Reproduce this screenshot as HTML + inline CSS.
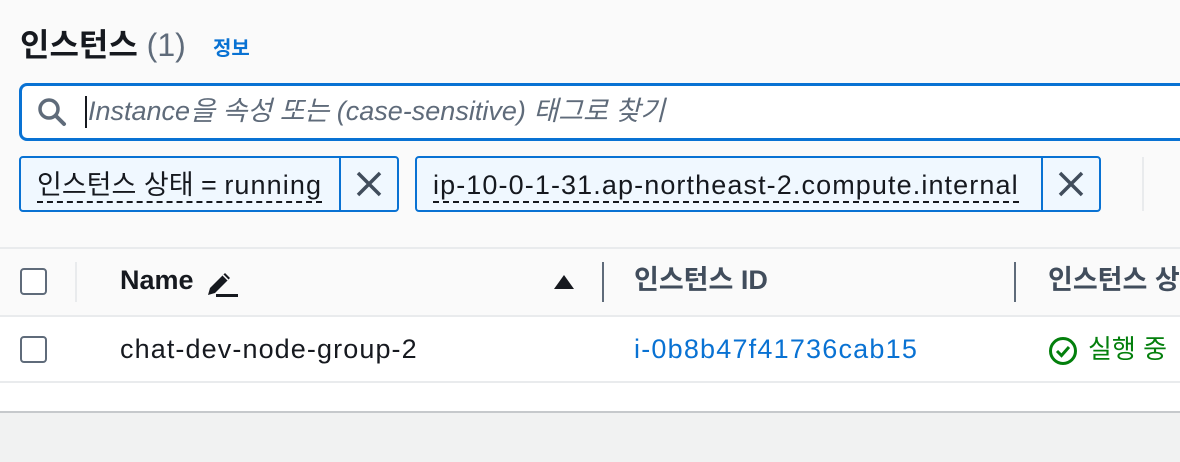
<!DOCTYPE html>
<html><head><meta charset="utf-8"><style>
*{margin:0;padding:0;box-sizing:border-box}
body{width:1180px;height:462px;overflow:hidden;background:#fafafa;font-family:"Liberation Sans","Noto Sans CJK KR",sans-serif;position:relative;color:#16191f}
.a{position:absolute;white-space:nowrap}
.l{letter-spacing:1.1px}
.tok{position:absolute;top:156px;height:56px;border:2px solid #0972d3;border-radius:4px;background:#f0f8ff}
.tok .t{position:absolute;left:16px;top:12px;font-size:27px;line-height:31px;border-bottom:2px dashed #16191f;color:#16191f}
.tok .x{position:absolute;top:0;right:0;width:58px;height:52px;border-left:2px solid #0972d3}
.cb{position:absolute;left:20px;width:27px;height:27px;border:2px solid #5f6b7a;border-radius:4px;background:#fff}
</style></head><body>
<div class="a" style="left:20px;top:24px;font-size:32px;font-weight:bold;line-height:42px">인스턴스 <span style="font-weight:normal;color:#5f6b7a">(1)</span></div>
<div class="a" style="left:213px;top:32px;font-size:20px;font-weight:bold;color:#0972d3">정보</div>

<div class="a" style="left:19px;top:83px;width:1180px;height:58px;border:3px solid #0972d3;border-radius:8px;background:#fff"></div>
<svg class="a" style="left:36px;top:96px" width="32" height="32" viewBox="0 0 32 32"><circle cx="13" cy="13" r="9" fill="none" stroke="#5f6b7a" stroke-width="3.5"/><path d="M20 20l8 8" stroke="#5f6b7a" stroke-width="4" stroke-linecap="round"/></svg>
<div class="a" style="left:85px;top:96px;width:2px;height:32px;background:#16191f"></div>
<div class="a" style="left:88px;top:95px;font-size:27px;line-height:32px;font-style:italic;color:#5f6b7a">Instance을 속성 또는 (case-sensitive) 태그로 찾기</div>

<div class="tok" style="left:19px;width:380px"><div class="t">인스턴스 상태 = <span class="l">running</span></div><div class="x"><svg width="56" height="52" viewBox="0 0 56 52"><path d="M17 15l22 22M39 15L17 37" stroke="#414d5c" stroke-width="3.5"/></svg></div></div>
<div class="tok" style="left:415px;width:686px"><div class="t l">ip-10-0-1-31.ap-northeast-2.compute.internal</div><div class="x"><svg width="56" height="52" viewBox="0 0 56 52"><path d="M17 15l22 22M39 15L17 37" stroke="#414d5c" stroke-width="3.5"/></svg></div></div>
<div class="a" style="left:1142px;top:157px;width:2px;height:54px;background:#e9ebed"></div>

<div class="a" style="left:0;top:247px;width:1180px;height:2px;background:#e9ebed"></div>
<div class="a" style="left:0;top:315px;width:1180px;height:2px;background:#e9ebed"></div>
<div class="a" style="left:0;top:317px;width:1180px;height:95px;background:#fff"></div>
<div class="a" style="left:0;top:381px;width:1180px;height:2px;background:#e9ebed"></div>
<div class="a" style="left:0;top:411px;width:1180px;height:2px;background:#c6c9cc"></div>
<div class="a" style="left:0;top:413px;width:1180px;height:49px;background:#f1f2f2"></div>

<div class="cb" style="top:268px"></div>
<div class="a" style="left:75px;top:262px;width:2px;height:40px;background:#e9ebed"></div>
<div class="a" style="left:120px;top:265px;font-size:27px;font-weight:bold;line-height:30px">Name</div>
<svg class="a" style="left:204px;top:266px" width="34" height="34" viewBox="0 0 34 34"><path d="M4 29l2-7 15-15 5 5-15 15z" fill="#16191f"/><path d="M19 9l5 5" stroke="#fff" stroke-width="1.5"/><rect x="12" y="28" width="22" height="3" fill="#16191f"/></svg>
<svg class="a" style="left:552px;top:273px" width="24" height="18" viewBox="0 0 24 18"><path d="M12 2L22 16H2z" fill="#16191f"/></svg>
<div class="a" style="left:602px;top:262px;width:2px;height:40px;background:#5f6b7a"></div>
<div class="a" style="left:634px;top:265px;font-size:27px;font-weight:bold;line-height:30px;color:#414d5c">인스턴스 ID</div>
<div class="a" style="left:1014px;top:262px;width:2px;height:40px;background:#5f6b7a"></div>
<div class="a" style="left:1048px;top:265px;font-size:27px;font-weight:bold;line-height:30px;color:#414d5c">인스턴스 상태</div>

<div class="cb" style="top:336px"></div>
<div class="a l" style="left:120px;top:334px;font-size:27px;line-height:30px">chat-dev-node-group-2</div>
<div class="a" style="left:634px;top:334px;font-size:27px;line-height:30px;color:#0972d3;letter-spacing:1.2px">i-0b8b47f41736cab15</div>
<svg class="a" style="left:1047px;top:335px" width="32" height="32" viewBox="0 0 32 32"><circle cx="16" cy="16" r="12.5" fill="none" stroke="#037f0c" stroke-width="3"/><path d="M10 16l4.5 4.5L22 12" fill="none" stroke="#037f0c" stroke-width="3"/></svg>
<div class="a" style="left:1088px;top:334px;font-size:26px;line-height:30px;color:#037f0c">실행 중</div>
</body></html>
